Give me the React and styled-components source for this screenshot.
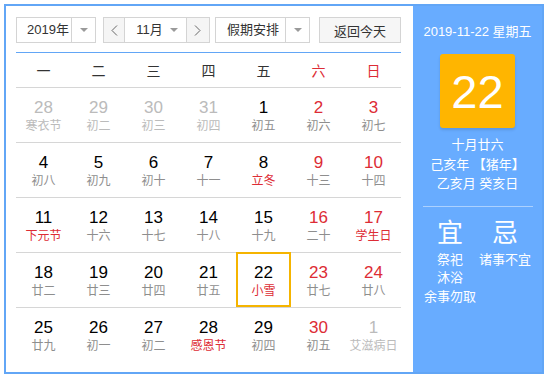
import React from 'react';
import styled, { createGlobalStyle } from 'styled-components';

const BLUE = '#68acff';
const BORDER_BLUE = '#62a6f6';
const RED = '#dd2c35';
const FONT = '"Liberation Sans", "Noto Sans CJK SC", Arial, sans-serif';

const Global = createGlobalStyle`
  html, body { margin: 0; padding: 0; background: #fff; }
  body { font-family: ${FONT}; }
  * { box-sizing: border-box; }
`;

const Frame = styled.div`
  margin: 4px 0 0 4px;
  width: 540px;
  height: 370px;
  border: 2px solid ${BORDER_BLUE};
  display: flex;
  font-family: ${FONT};
`;

const Main = styled.div`
  width: 407px;
  padding: 11px 12px 0 10px;
  background: #fff;
`;

const Toolbar = styled.div`
  display: flex;
  align-items: center;
  height: 26px;
`;

const Box = styled.div`
  display: flex;
  height: 26px;
  width: ${p => p.$w}px;
  margin-left: ${p => p.$ml || 0}px;
  border: 1px solid #d4d4d4;
  background: #fff;
  font-size: 13px;
  color: #333;
`;

const SelLabel = styled.div`
  flex: 1;
  display: flex;
  align-items: center;
  padding-left: ${p => p.$pl}px;
  line-height: 24px;
  white-space: nowrap;
`;

const CaretCell = styled.div`
  width: ${p => p.$w || 24}px;
  display: flex;
  align-items: center;
  justify-content: center;
  border-left: ${p => (p.$sep ? '1px solid #d4d4d4' : 'none')};
`;

const Caret = styled.span`
  width: 0;
  height: 0;
  border-left: 4px solid transparent;
  border-right: 4px solid transparent;
  border-top: 4px solid #9a9a9a;
`;

const NavBtn = styled.div`
  width: ${p => p.$w}px;
  display: flex;
  align-items: center;
  justify-content: center;
  background: #f5f5f5;
  border-left: ${p => (p.$side === 'right' ? '1px solid #d4d4d4' : 'none')};
  border-right: ${p => (p.$side === 'left' ? '1px solid #d4d4d4' : 'none')};
`;

const TodayBtn = styled.div`
  width: 82px;
  height: 26px;
  margin-left: 9px;
  border: 1px solid #d4d4d4;
  background: #f6f6f6;
  font-size: 13px;
  color: #333;
  display: flex;
  align-items: center;
  justify-content: center;
`;

const Grid = styled.div`
  margin-top: 9px;
  border-top: 1px solid ${BORDER_BLUE};
  display: grid;
  grid-template-columns: repeat(7, 55px);
`;

const WeekHead = styled.div`
  height: 35px;
  border-bottom: 1px solid #d6d6d6;
  display: flex;
  align-items: center;
  justify-content: center;
  font-size: 14px;
  color: ${p => (p.$red ? RED : '#333')};
`;

const Cell = styled.div`
  position: relative;
  height: 55px;
  border-bottom: ${p => (p.$last ? 'none' : '1px solid #d6d6d6')};
  display: flex;
  flex-direction: column;
  align-items: center;
  padding-top: 10px;
  &::after {
    content: '';
    display: ${p => (p.$today ? 'block' : 'none')};
    position: absolute;
    left: 0;
    right: 0;
    top: -1px;
    bottom: 0;
    border: 2px solid #f5b400;
  }
`;

const Num = styled.div`
  font-size: 17px;
  line-height: 20px;
  color: ${p => (p.$tone === 'other' ? '#bbbbbb' : p.$tone === 'red' ? RED : '#000')};
`;

const Lunar = styled.div`
  font-size: 12px;
  line-height: 16px;
  white-space: nowrap;
  color: ${p => (p.$tone === 'other' ? '#bbbbbb' : p.$tone === 'red' ? RED : '#8e8e8e')};
`;

const Side = styled.div`
  flex: 1;
  background: ${BLUE};
  color: #fff;
  display: flex;
  flex-direction: column;
  align-items: center;
  padding-top: 17px;
`;

const DateLine = styled.div`
  font-size: 13px;
  line-height: 18px;
  white-space: nowrap;
`;

const DayBadge = styled.div`
  margin-top: 13px;
  width: 75px;
  height: 74px;
  border-radius: 3px;
  background: #ffb500;
  box-shadow: 0 2px 3px rgba(0, 0, 0, 0.12);
  display: flex;
  align-items: center;
  justify-content: center;
  font-size: 47px;
  color: #fff;
  font-family: "Liberation Sans", Arial, sans-serif;
`;

const LunarInfo = styled.div`
  margin-top: 7px;
  font-size: 13px;
  line-height: 19.5px;
  text-align: center;
  white-space: nowrap;
`;

const Divider = styled.div`
  margin-top: 12px;
  width: 110px;
  height: 1px;
  background: rgba(255, 255, 255, 0.45);
`;

const Advice = styled.div`
  margin-top: 11px;
  display: flex;
  justify-content: center;
`;

const AdviceCol = styled.div`
  width: 55px;
  display: flex;
  flex-direction: column;
  align-items: center;
`;

const AdviceHead = styled.div`
  font-size: 26px;
  line-height: 30px;
  margin-bottom: 3px;
`;

const AdviceItem = styled.div`
  font-size: 13px;
  line-height: 18.5px;
  white-space: nowrap;
`;

const Chevron = ({ dir }) => (
  <svg width="7" height="11" viewBox="0 0 7 11">
    <polyline
      points={dir === 'left' ? '6,0.5 1,5.5 6,10.5' : '1,0.5 6,5.5 1,10.5'}
      fill="none"
      stroke="#666"
      strokeWidth="1"
    />
  </svg>
);

const weekdays = ['一', '二', '三', '四', '五', '六', '日'];

// [num, lunar, numTone, lunarTone, today]
const days = [
  ['28', '寒衣节', 'other', 'other'], ['29', '初二', 'other', 'other'], ['30', '初三', 'other', 'other'], ['31', '初四', 'other', 'other'],
  ['1', '初五'], ['2', '初六', 'red'], ['3', '初七', 'red'],
  ['4', '初八'], ['5', '初九'], ['6', '初十'], ['7', '十一'], ['8', '立冬', null, 'red'], ['9', '十三', 'red'], ['10', '十四', 'red'],
  ['11', '下元节', null, 'red'], ['12', '十六'], ['13', '十七'], ['14', '十八'], ['15', '十九'], ['16', '二十', 'red'], ['17', '学生日', 'red', 'red'],
  ['18', '廿二'], ['19', '廿三'], ['20', '廿四'], ['21', '廿五'], ['22', '小雪', null, 'red', true], ['23', '廿七', 'red'], ['24', '廿八', 'red'],
  ['25', '廿九'], ['26', '初一'], ['27', '初二'], ['28', '感恩节', null, 'red'], ['29', '初四'], ['30', '初五', 'red'], ['1', '艾滋病日', 'other', 'other'],
];

export default function App() {
  return (
    <>
      <Global />
      <Frame>
        <Main>
          <Toolbar>
            <Box $w={80}>
              <SelLabel $pl={10}>2019年</SelLabel>
              <CaretCell $sep><Caret /></CaretCell>
            </Box>
            <Box $w={107} $ml={7}>
              <NavBtn $w={22} $side="left"><Chevron dir="left" /></NavBtn>
              <SelLabel $pl={11}>11月</SelLabel>
              <CaretCell $w={24}><Caret /></CaretCell>
              <NavBtn $w={24} $side="right"><Chevron dir="right" /></NavBtn>
            </Box>
            <Box $w={95} $ml={5}>
              <SelLabel $pl={11}>假期安排</SelLabel>
              <CaretCell $sep><Caret /></CaretCell>
            </Box>
            <TodayBtn>返回今天</TodayBtn>
          </Toolbar>
          <Grid>
            {weekdays.map((w, i) => (
              <WeekHead key={w} $red={i >= 5}>{w}</WeekHead>
            ))}
            {days.map(([n, l, nt, lt, today], i) => (
              <Cell key={i} $last={i >= 28} $today={today}>
                <Num $tone={nt}>{n}</Num>
                <Lunar $tone={lt}>{l}</Lunar>
              </Cell>
            ))}
          </Grid>
        </Main>
        <Side>
          <DateLine>2019-11-22 星期五</DateLine>
          <DayBadge>22</DayBadge>
          <LunarInfo>
            十月廿六<br />
            己亥年 【猪年】<br />
            乙亥月 癸亥日
          </LunarInfo>
          <Divider />
          <Advice>
            <AdviceCol>
              <AdviceHead>宜</AdviceHead>
              <AdviceItem>祭祀</AdviceItem>
              <AdviceItem>沐浴</AdviceItem>
              <AdviceItem>余事勿取</AdviceItem>
            </AdviceCol>
            <AdviceCol>
              <AdviceHead>忌</AdviceHead>
              <AdviceItem>诸事不宜</AdviceItem>
            </AdviceCol>
          </Advice>
        </Side>
      </Frame>
    </>
  );
}
